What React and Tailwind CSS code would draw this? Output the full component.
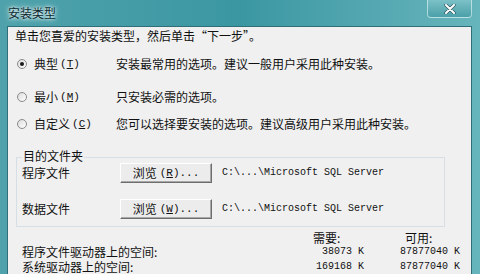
import React from 'react'

const cjk = { fontFamily: '"Noto Sans CJK SC", "Noto Sans", sans-serif' }
const mono = { fontFamily: '"Liberation Mono", "DejaVu Sans Mono", monospace' }

const Radio = ({ checked }) => (
  <span className="relative inline-block w-[10px] h-[10px] rounded-full border border-[#8a8a8a] bg-gradient-to-br from-[#dcdcdc] to-white">
    {checked && (
      <span className="absolute left-[2px] top-[2px] w-[4px] h-[4px] rounded-full bg-[#1a1a1a]" />
    )}
  </span>
)

const options = [
  { label: '典型', key: 'T', desc: '安装最常用的选项。建议一般用户采用此种安装。', checked: true, gap: 'mt-[6px]' },
  { label: '最小', key: 'M', desc: '只安装必需的选项。', gap: 'mt-[7px]' },
  { label: '自定义', key: 'C', desc: '您可以选择要安装的选项。建议高级用户采用此种安装。', gap: 'mt-[1px]' },
]

const Browse = ({ hot }) => (
  <button className="w-[92px] h-[20px] flex items-center justify-center text-[12px] text-[#111] bg-[#ececec] border border-t-white border-l-white border-r-[#6e6e6e] border-b-[#6e6e6e] shadow-[inset_-1px_-1px_0_#a8a8a8]">
    <span style={cjk}>浏览</span>
    <span className="ml-[3px] text-[11px]" style={mono}>(<span className="underline">{hot}</span>)...</span>
  </button>
)

const App = () => {
  return (
    <div className="w-[480px] h-[274px] overflow-hidden flex flex-col bg-gradient-to-r from-[#4fa2ab] via-[#3a97a2] to-[#67b5bc]" style={cjk}>
      <div className="h-[27px] flex items-start justify-between pl-[8px] pr-[8px]">
        <span className="mt-[4px] text-[12px] text-[#0b2a30] [text-shadow:0_0_6px_#ffffff,0_0_3px_#ffffff]">安装类型</span>
        <div className="w-[45px] h-[18px] rounded-b-[4px] border border-t-0 border-[#d4eef0]/70 bg-gradient-to-b from-[#7cc1c7] to-[#4aa0a9] flex items-center justify-center">
          <svg width="12" height="10" viewBox="0 0 12 10">
            <path d="M2 1 L10 9 M10 1 L2 9" stroke="#2c5a60" strokeWidth="3.4" strokeLinecap="round" />
            <path d="M2 1 L10 9 M10 1 L2 9" stroke="#ffffff" strokeWidth="2" strokeLinecap="round" />
          </svg>
        </div>
      </div>
      <div className="flex-1 ml-[7px] mr-[8px] bg-[#f0f0f0] border border-[#2f6f78] border-b-0 text-[12px] text-[#111] leading-none">
        <div className="h-[18px] flex items-center pl-[7px]">单击您喜爱的安装类型，然后单击“下一步”。</div>
        {options.map(o => (
          <div key={o.key} className={`${o.gap} h-[26px] flex items-center pl-[9px]`}>
            <Radio checked={o.checked} />
            <span className="ml-[7px] w-[82px] flex items-center">
              {o.label}
              <span className="ml-[2px] text-[11px]" style={mono}>(<span className="underline">{o.key}</span>)</span>
            </span>
            <span>{o.desc}</span>
          </div>
        ))}
        <div className="relative ml-[8px] w-[429px] h-[70px] border border-[#d5dfe5] mt-[20px]">
          <span className="absolute left-[5px] top-[-8px] px-[1px] bg-[#f0f0f0]">目的文件夹</span>
          <div className="pt-[5px] pl-[5px] flex flex-col gap-[16px]">
            {[['程序文件', 'R'], ['数据文件', 'W']].map(([name, hot]) => (
              <div key={hot} className="flex items-center h-[20px]">
                <span className="w-[98px]">{name}</span>
                <Browse hot={hot} />
                <span className="ml-[10px] text-[10px]" style={mono}>C:\...\Microsoft SQL Server</span>
              </div>
            ))}
          </div>
        </div>
        <div className="grid grid-cols-[236px_106px_96px] pl-[14px] mt-[2px]">
          <span />
          <span className="h-[15px] pl-[55px] flex items-end">需要:</span>
          <span className="h-[15px] pl-[41px] flex items-end">可用:</span>
          <span className="h-[15px] flex items-center">程序文件驱动器上的空间:</span>
          <span className="h-[15px] flex items-center justify-end text-[10px]" style={mono}>38073 K</span>
          <span className="h-[15px] flex items-center justify-end text-[10px]" style={mono}>87877040 K</span>
          <span className="h-[15px] flex items-center">系统驱动器上的空间:</span>
          <span className="h-[15px] flex items-center justify-end text-[10px]" style={mono}>169168 K</span>
          <span className="h-[15px] flex items-center justify-end text-[10px]" style={mono}>87877040 K</span>
        </div>
      </div>
    </div>
  )
}

export default App
